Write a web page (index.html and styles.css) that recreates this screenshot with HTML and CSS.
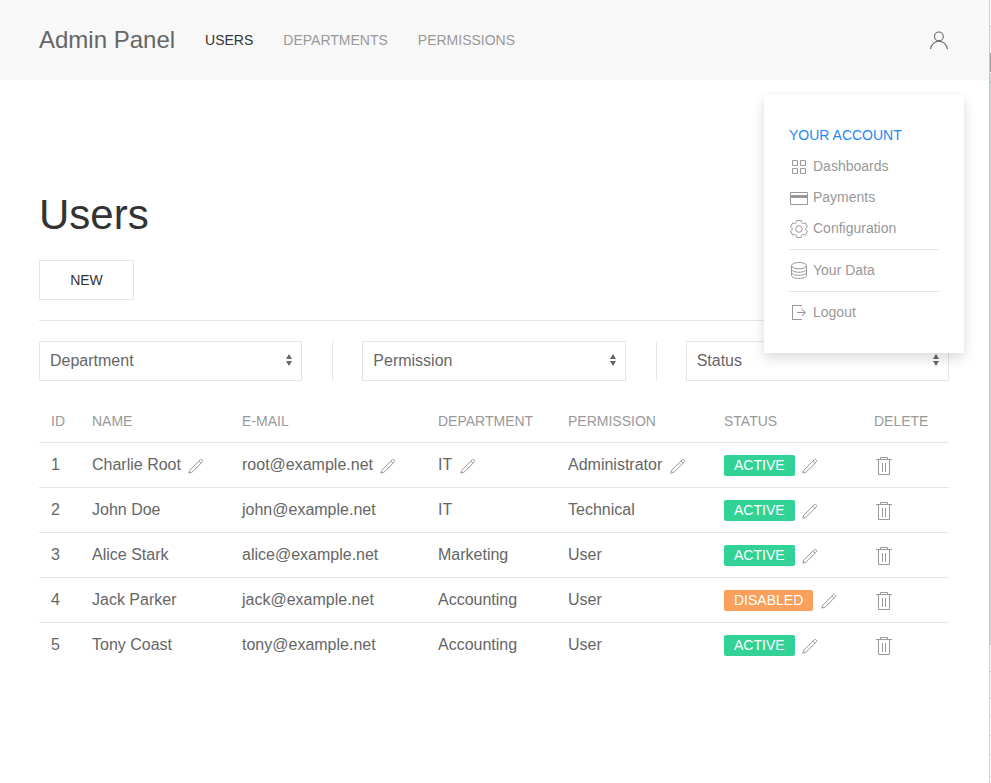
FILE: index.html
```html
<!DOCTYPE html>
<html lang="en">
<head>
<meta charset="utf-8">
<title>Admin Panel</title>
<link rel="stylesheet" href="styles.css">
</head>
<body>
<svg class="defs" aria-hidden="true">
  <symbol id="pencil" viewBox="0 0 20 20"><path fill="none" stroke="currentColor" d="M17.25,6.01 L7.12,16.1 L3.82,17.2 L5.02,13.9 L15.12,3.88 C15.71,3.29 16.66,3.29 17.25,3.88 C17.83,4.47 17.83,5.42 17.25,6.01 Z M15.98,7.27 L13.85,5.15"/></symbol>
  <symbol id="trash" viewBox="0 0 20 20"><path fill="none" stroke="currentColor" d="M6.5,3V1.5H13.5V3 M4.5,4V18.5H15.5V4 M8.5,7V16 M11.5,7V16 M2,3.5H18"/></symbol>
</svg>
<div class="page">
  <header class="navbar">
    <a class="brand">Admin Panel</a>
    <nav class="nav"><a class="active">USERS</a><a>DEPARTMENTS</a><a>PERMISSIONS</a></nav>
    <div class="account">
      <svg width="20" height="20" viewBox="0 0 20 20" fill="none" stroke="currentColor" stroke-width="1.1"><circle cx="9.9" cy="6.4" r="4.4"/><path d="M1.5,19 C2.3,14.5 5.8,11.2 10,11.2 C14.2,11.2 17.7,14.6 18.5,19.2"/></svg>
      <div class="dropdown">
        <div class="title">YOUR ACCOUNT</div>
        <a class="item"><svg viewBox="0 0 20 20"><path d="M3.5,3.5h5v5h-5z M11.5,3.5h5v5h-5z M3.5,11.5h5v5h-5z M11.5,11.5h5v5h-5z"/></svg>Dashboards</a>
        <a class="item"><svg viewBox="0 0 20 20"><path d="M1.5,4.5h17v12h-17z"/><path class="solid" d="M1,7h18v3h-18z"/></svg>Payments</a>
        <a class="item"><svg viewBox="0 0 20 20"><circle cx="9.997" cy="10" r="3.31"/><path d="M18.488,12.285 L16.205,16.237 C15.322,15.496 14.185,15.281 13.303,15.791 C12.428,16.289 12.047,17.373 12.246,18.5 L7.735,18.5 C7.938,17.374 7.553,16.299 6.684,15.791 C5.801,15.27 4.655,15.492 3.773,16.237 L1.5,12.285 C2.573,11.871 3.317,10.999 3.317,9.991 C3.305,8.98 2.573,8.121 1.5,7.716 L3.765,3.784 C4.645,4.516 5.794,4.738 6.687,4.232 C7.555,3.722 7.939,2.637 7.735,1.5 L12.263,1.5 C12.072,2.637 12.441,3.71 13.314,4.22 C14.206,4.73 15.343,4.516 16.225,3.794 L18.487,7.714 C17.404,8.117 16.661,8.988 16.67,10.009 C16.672,11.018 17.415,11.88 18.488,12.285 Z"/></svg>Configuration</a>
        <hr>
        <a class="item"><svg viewBox="0 0 20 20"><ellipse cx="10" cy="4.64" rx="7.5" ry="3.14"/><path d="M17.5,8.11 C17.5,9.85 14.14,11.25 10,11.25 C5.86,11.25 2.5,9.84 2.5,8.11 M17.5,11.25 C17.5,12.99 14.14,14.39 10,14.39 C5.86,14.39 2.5,12.98 2.5,11.25 M17.49,4.64 L17.5,14.36 C17.5,16.1 14.14,17.5 10,17.5 C5.86,17.5 2.5,16.09 2.5,14.36 L2.5,4.64"/></svg>Your Data</a>
        <hr>
        <a class="item"><svg viewBox="0 0 20 20"><path class="solid" d="M13.1,13.4 12.5,12.8 15.28,10 8,10 8,9 15.28,9 12.5,6.2 13.1,5.62 17,9.5Z M13,2 3,2 3,17 13,17 13,16 4,16 4,3 13,3Z"/></svg>Logout</a>
      </div>
    </div>
  </header>
  <main>
    <h1>Users</h1>
    <button class="new">NEW</button>
    <div class="filters">
      <div class="select">Department<svg viewBox="0 0 24 16"><path d="M12,1 9,6 15,6Z M12,13 9,8 15,8Z"/></svg></div>
      <div class="select">Permission<svg viewBox="0 0 24 16"><path d="M12,1 9,6 15,6Z M12,13 9,8 15,8Z"/></svg></div>
      <div class="select">Status<svg viewBox="0 0 24 16"><path d="M12,1 9,6 15,6Z M12,13 9,8 15,8Z"/></svg></div>
    </div>
    <table>
      <colgroup><col class="c-id"><col class="c-name"><col class="c-mail"><col class="c-dept"><col class="c-perm"><col class="c-status"><col></colgroup>
      <thead><tr><th>ID</th><th>NAME</th><th>E-MAIL</th><th>DEPARTMENT</th><th>PERMISSION</th><th>STATUS</th><th>DELETE</th></tr></thead>
      <tbody>
        <tr><td>1</td><td><div class="cell">Charlie Root<svg class="edit"><use href="#pencil"/></svg></div></td><td><div class="cell">root@example.net<svg class="edit"><use href="#pencil"/></svg></div></td><td><div class="cell">IT<svg class="edit"><use href="#pencil"/></svg></div></td><td><div class="cell">Administrator<svg class="edit"><use href="#pencil"/></svg></div></td><td><div class="cell"><span class="label">ACTIVE</span><svg class="edit"><use href="#pencil"/></svg></div></td><td><svg class="trash"><use href="#trash"/></svg></td></tr>
        <tr><td>2</td><td>John Doe</td><td>john@example.net</td><td>IT</td><td>Technical</td><td><div class="cell"><span class="label">ACTIVE</span><svg class="edit"><use href="#pencil"/></svg></div></td><td><svg class="trash"><use href="#trash"/></svg></td></tr>
        <tr><td>3</td><td>Alice Stark</td><td>alice@example.net</td><td>Marketing</td><td>User</td><td><div class="cell"><span class="label">ACTIVE</span><svg class="edit"><use href="#pencil"/></svg></div></td><td><svg class="trash"><use href="#trash"/></svg></td></tr>
        <tr><td>4</td><td>Jack Parker</td><td>jack@example.net</td><td>Accounting</td><td>User</td><td><div class="cell"><span class="label warning">DISABLED</span><svg class="edit"><use href="#pencil"/></svg></div></td><td><svg class="trash"><use href="#trash"/></svg></td></tr>
        <tr><td>5</td><td>Tony Coast</td><td>tony@example.net</td><td>Accounting</td><td>User</td><td><div class="cell"><span class="label">ACTIVE</span><svg class="edit"><use href="#pencil"/></svg></div></td><td><svg class="trash"><use href="#trash"/></svg></td></tr>
      </tbody>
    </table>
  </main>
</div>
<div class="edge"></div>
</body>
</html>
```
FILE: styles.css
```css
* { box-sizing: border-box; }
body {
  margin: 0;
  height: 783px;
  display: flex;
  overflow: hidden;
  background: #fff;
  color: #666;
  font: 16px/24px "Liberation Sans", Arial, sans-serif;
}
.defs { position: absolute; width: 0; height: 0; }
.page { width: 989px; flex: none; }
.edge {
  width: 2px;
  border-left: 1px solid #ccc;
  background: linear-gradient(
    #fff 26px, #ccc 26px 27px, #f5f5f5 27px 53px, #999 53px 72px, #fff 72px 73px,
    #ccc 73px 81px, #9cc 81px 83px, #ccc 83px 645px, #f5f5f5 645px 671px,
    #ccc 671px 672px, #f5f5f5 672px 698px, #ccc 698px 699px, #fff 699px 716px,
    #e5e5e5 716px 717px, #fff 717px 735px, #e5e5e5 735px 736px, #fff 736px 754px,
    #e5e5e5 754px 755px, #fff 755px 776px, #e5e5e5 776px 777px, #fff 777px);
}
.navbar {
  height: 80px;
  padding: 0 40px 0 39px;
  display: flex;
  align-items: center;
  background: #f8f8f8;
}
.brand { font-size: 24px; }
.nav { display: flex; gap: 30px; margin-left: 30px; font-size: 14px; color: #999; }
.nav .active { color: #333; }
.account { margin-left: auto; position: relative; height: 20px; color: #666; }
.account > svg { display: block; }
.dropdown {
  position: absolute;
  z-index: 2;
  top: 65px;
  right: -15px;
  width: 200px;
  height: 258px;
  padding: 25px;
  background: #fff;
  box-shadow: 0 5px 12px rgba(0, 0, 0, .15);
  color: #999;
  font-size: 14px;
  line-height: 21px;
}
.title { padding: 5px 0; color: #1e87f0; }
.item { display: flex; align-items: center; height: 31px; gap: 4px; }
.item svg { width: 20px; height: 20px; margin-top: 1px; fill: none; stroke: currentColor; }
.item .solid { fill: currentColor; stroke: none; }
.dropdown hr { margin: 5px 0; border: 0; border-top: 1px solid #e5e5e5; }
main { padding: 109px 40px 0 39px; }
h1 { margin: 0 0 20px; color: #333; font-size: 42px; line-height: 51px; font-weight: 400; }
.new {
  display: block;
  width: 95px;
  height: 40px;
  margin-bottom: 20px;
  padding: 0;
  border: 1px solid #e5e5e5;
  background: none;
  color: #333;
  font: 14px/38px "Liberation Sans", Arial, sans-serif;
}
.filters {
  display: grid;
  grid-template-columns: repeat(3, 1fr);
  gap: 60px;
  padding-top: 20px;
  border-top: 1px solid #e5e5e5;
}
.select {
  position: relative;
  display: flex;
  justify-content: space-between;
  align-items: center;
  height: 40px;
  padding-left: 10px;
  border: 1px solid #e5e5e5;
}
.select svg { width: 24px; height: 16px; fill: #666; }
.select + .select::before {
  content: "";
  position: absolute;
  left: -31px;
  top: -1px;
  height: 40px;
  border-left: 1px solid #e5e5e5;
}
table { width: 910px; margin-top: 20px; table-layout: fixed; border-collapse: separate; border-spacing: 0; }
.c-id { width: 41px; }
.c-name { width: 150px; }
.c-mail { width: 196px; }
.c-dept { width: 130px; }
.c-perm { width: 156px; }
.c-status { width: 150px; }
th { height: 41px; padding: 0 12px; text-align: left; font-size: 14px; line-height: 21px; font-weight: 400; color: #999; }
td { height: 45px; padding: 0 12px; border-top: 1px solid #e5e5e5; white-space: nowrap; vertical-align: middle; }
.cell { display: flex; align-items: center; height: 24px; }
.edit { flex: none; width: 20px; height: 20px; margin: 2px 0 0 4.4px; color: #999; }
.trash { display: block; width: 20px; height: 20px; margin-top: 2px; color: #999; }
.label {
  margin-top: 1px;
  padding: 0 10px;
  border-radius: 2px;
  background: #32d296;
  color: #fff;
  font-size: 14px;
  line-height: 21px;
}
.warning { background: #faa05a; }
```
